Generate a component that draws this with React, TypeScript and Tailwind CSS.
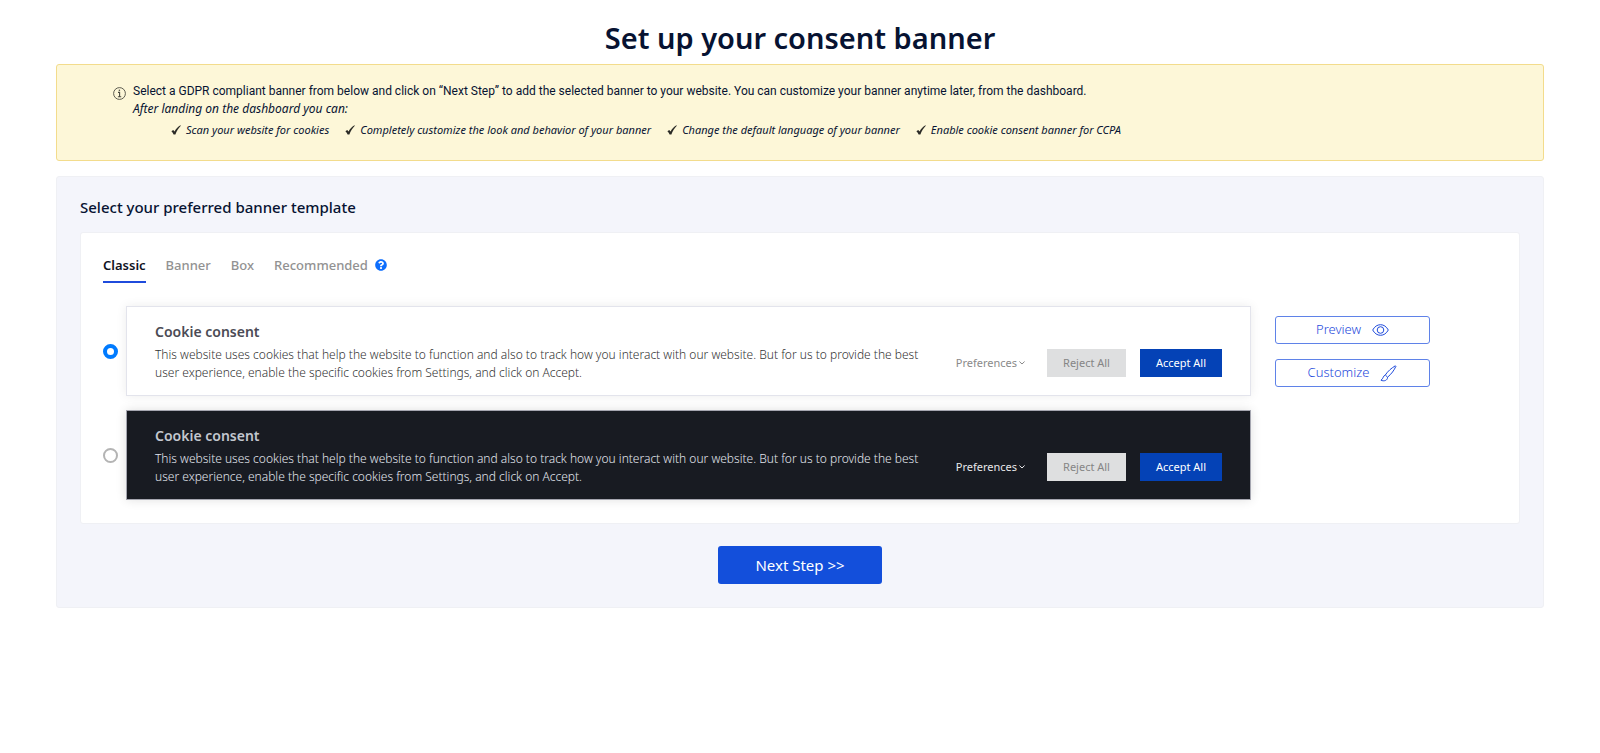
import React, { useState } from 'react';
import { FaQuestionCircle } from 'react-icons/fa';

const features = [
  'Scan your website for cookies',
  'Completely customize the look and behavior of your banner',
  'Change the default language of your banner',
  'Enable cookie consent banner for CCPA',
];

const tabs = ['Classic', 'Banner', 'Box', 'Recommended'];

const InfoIcon: React.FC = () => (
  <svg viewBox="0 0 13 13" className="mt-1 h-[13px] w-[13px] shrink-0" fill="none" stroke="#4a4a40" aria-hidden="true">
    <circle cx="6.5" cy="6.5" r="5.9" strokeWidth="0.9" />
    <path d="M5 5.4 H6.6 V9.6 M4.9 9.7 H8.2" strokeWidth="1.1" />
    <circle cx="6.4" cy="3.3" r="0.8" fill="#4a4a40" stroke="none" />
  </svg>
);

const CheckMark: React.FC = () => (
  <svg viewBox="0 0 10 10" className="h-[10px] w-[10px] shrink-0" aria-hidden="true">
    <path d="M0.4 6.3 L2.2 4.9 L3.6 6.6 C5 3.8 6.8 1.8 9.4 0.3 L9.8 0.8 C7.4 3.2 5.6 6 4.4 9.5 L2.6 9.6 C2.1 8.3 1.4 7.2 0.4 6.3 Z" fill="#2b2b26" />
  </svg>
);

const EyeIcon: React.FC = () => (
  <svg viewBox="0 0 17 12" className="h-3 w-[17px]" fill="none" stroke="currentColor" aria-hidden="true">
    <path d="M0.7 6 C2.6 2.5 5.3 0.7 8.5 0.7 C11.7 0.7 14.4 2.5 16.3 6 C14.4 9.5 11.7 11.3 8.5 11.3 C5.3 11.3 2.6 9.5 0.7 6 Z" />
    <circle cx="8.5" cy="6" r="3.3" />
  </svg>
);

const BrushIcon: React.FC = () => (
  <svg viewBox="0 0 17 17" className="h-[17px] w-[17px]" fill="none" stroke="currentColor" strokeLinejoin="round" aria-hidden="true">
    <path d="M5.3 10 C8 6 11.5 3 15.4 0.8 L15.9 1.3 C14.2 5.2 11.4 9 7.6 12.2 Z" />
    <path d="M5.3 10 C3.2 10.6 3.4 13.6 1 15.2 C3.8 16.6 7.6 15.6 7.6 12.2" />
  </svg>
);

interface TemplateProps {
  id: string;
  dark?: boolean;
  checked: boolean;
  onSelect: () => void;
}

const BannerTemplate: React.FC<TemplateProps> = ({ id, dark = false, checked, onSelect }) => (
  <div className="flex items-center gap-2">
    <input
      type="radio"
      id={id}
      name="template"
      aria-label={dark ? 'Dark template' : 'Light template'}
      checked={checked}
      onChange={onSelect}
      className="h-[15px] w-[15px] shrink-0 appearance-none rounded-full border-2 border-[#b4b4b4] bg-white checked:border-4 checked:border-[#007bff]"
    />
    <div
      className={
        dark
          ? 'flex flex-1 items-center border border-[#a5a6b0] bg-[#181b22] px-7 pt-[11px] pb-[13px] text-[#e3e7ef] shadow-[0_0_10px_rgba(0,0,0,0.12)]'
          : 'flex flex-1 items-center border border-[#e3e4ec] bg-white px-7 pt-[11px] pb-[13px] text-[#333333] shadow-[0_0_10px_rgba(0,0,0,0.08)]'
      }
    >
      <div className="flex-1">
        <h3 className={dark ? 'text-sm leading-[28px] font-semibold text-[#c3c7cf]' : 'text-sm leading-[28px] font-semibold text-[#4b4b55]'}>
          Cookie consent
        </h3>
        <p className="text-xs leading-[18px] font-light">
          This website uses cookies that help the website to function and also to track how you interact with our website. But for us to provide the best user experience, enable the specific cookies from Settings, and click on Accept.
        </p>
      </div>
      <div className="mt-[26px] ml-6 flex shrink-0 items-center text-[11px]">
        <button className={dark ? 'mr-[22px] flex items-center gap-[2px] text-[#e8e8ea]' : 'mr-[22px] flex items-center gap-[2px] text-[#8a8a8a]'}>
          Preferences
          <svg viewBox="0 0 6 4" className="h-1 w-[6px]" fill="none" stroke="currentColor" aria-hidden="true">
            <path d="M0.4 0.5 L3 3 L5.6 0.5" />
          </svg>
        </button>
        <button className="mr-[14px] h-7 w-[79px] bg-[#dedfe0] text-[#858585]">Reject All</button>
        <button className="h-7 w-[82px] bg-[#0442b6] text-white">Accept All</button>
      </div>
    </div>
  </div>
);

const App: React.FC = () => {
  const [activeTab, setActiveTab] = useState('Classic');
  const [template, setTemplate] = useState('light');

  return (
    <main className="min-h-screen bg-white px-14 pt-[14px] font-['Noto_Sans','Open_Sans',sans-serif] text-[#071332]">
      <h1 className="mb-[2px] text-center text-[29px] leading-[48px] font-semibold">Set up your consent banner</h1>

      {/* Notice */}
      <section className="flex gap-[7px] rounded-[3px] border border-[#f3dc8c] bg-[#fdf7d8] px-14 pt-[18px] pb-[22px] text-xs">
        <InfoIcon />
        <div>
          <p className="font-['Roboto',sans-serif] leading-[17px]">
            Select a GDPR compliant banner from below and click on “Next Step” to add the selected banner to your website. You can customize your banner anytime later, from the dashboard.
          </p>
          <p className="leading-[17px] italic">After landing on the dashboard you can:</p>
          <ul className="mt-[5px] ml-[38px] flex flex-wrap gap-x-4 text-[11px] leading-4 italic">
            {features.map((feature) => (
              <li key={feature} className="flex items-center gap-[5px]">
                <CheckMark />
                {feature}
              </li>
            ))}
          </ul>
        </div>
      </section>

      {/* Template picker */}
      <section className="mt-[15px] rounded-[3px] border border-[#eff0f4] bg-[#f4f5fb] px-[23px] pt-[18px] pb-[23px]">
        <h2 className="text-[15px] leading-6 font-medium">Select your preferred banner template</h2>

        <div className="mt-[13px] rounded-[3px] border border-[#eff0f4] bg-white px-[22px] pt-[21px] pb-[23px]">
          <div className="flex items-start gap-5" role="tablist">
            {tabs.map((tab) => (
              <div key={tab} className="flex items-center gap-[7px]">
                <button
                  role="tab"
                  aria-selected={activeTab === tab}
                  onClick={() => setActiveTab(tab)}
                  className={
                    activeTab === tab
                      ? 'border-b-2 border-[#1f4bdc] pb-[5px] text-[13px] leading-[22px] font-semibold text-[#10131f]'
                      : 'border-b-2 border-transparent pb-[5px] text-[13px] leading-[22px] font-medium text-[#929292]'
                  }
                >
                  {tab}
                </button>
                {tab === 'Recommended' && <FaQuestionCircle className="mb-[7px] h-3 w-3 text-[#0d6efd]" />}
              </div>
            ))}
          </div>

          <div className="mt-[23px] flex items-start">
            <div className="flex flex-1 flex-col gap-[14px]">
              <BannerTemplate id="light" checked={template === 'light'} onSelect={() => setTemplate('light')} />
              <BannerTemplate id="dark" dark checked={template === 'dark'} onSelect={() => setTemplate('dark')} />
            </div>
            <div className="mt-[10px] mr-[67px] ml-6 flex w-[155px] flex-col gap-[15px] text-[13px] text-[#1f4bdc]">
              <button className="flex h-7 items-center justify-center gap-[11px] rounded-[3px] border border-[#5f82e8] font-light">
                Preview <EyeIcon />
              </button>
              <button className="flex h-7 items-center justify-center gap-[11px] rounded-[3px] border border-[#5f82e8] font-light">
                Customize <BrushIcon />
              </button>
            </div>
          </div>
        </div>

        <div className="mt-[22px] flex justify-center">
          <button className="h-[38px] w-[164px] rounded-[3px] bg-[#134fdb] text-[15px] text-white">Next Step &gt;&gt;</button>
        </div>
      </section>
    </main>
  );
};

export default App;
